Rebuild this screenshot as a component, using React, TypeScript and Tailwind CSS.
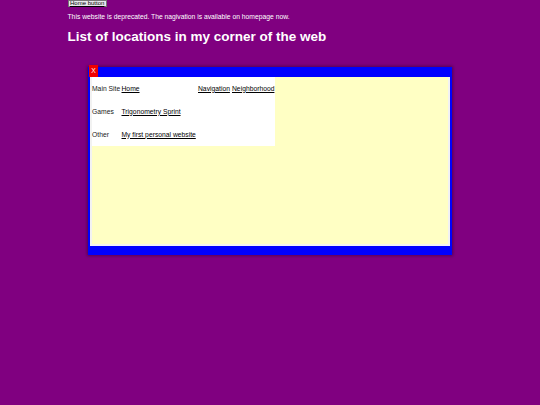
export default function App() {
  return (
    <div
      className="min-h-[405px] w-full bg-[#800080] pl-[67.5px]"
      style={{ fontFamily: '"Liberation Sans", Arial, sans-serif' }}
    >
      <button className="block h-[7px] border border-[#767676] bg-[#e9e9ed] px-[1.5px] text-[6px] leading-[5px] text-black underline">
        Home button
      </button>
      <p className="mt-[5.5px] text-[6.75px] leading-[8px] text-white">
        This website is deprecated. The nagivation is available on homepage now.
      </p>
      <h2 className="mt-[8.5px] text-[13.5px] font-bold leading-[16px] text-white">
        List of locations in my corner of the web
      </h2>
      <div className="relative ml-[20.5px] mt-[22px] flex h-[188px] w-[364px] flex-col bg-[#0000ff] px-[2px] pb-[9px] pt-[10px] shadow-[0_0_3px_1px_rgba(0,0,0,0.35)]">
        <div className="absolute left-[1px] top-[-2px] flex h-[12px] w-[9px] items-center justify-center bg-[#f00000] text-[6.75px] leading-none text-white">
          X
        </div>
        <div className="flex-1 border-x-2 border-b-2 border-[#f2f2f2] bg-[#ffffc4]">
          <div className="grid w-[183px] grid-cols-[29.5px_76.5px_34px_1fr] grid-rows-[23px_23px_23px] items-center bg-white text-[6.75px] leading-[8px] text-[#222222]">
            <span>Main Site</span>
            <a className="text-black underline">Home</a>
            <a className="text-black underline">Navigation</a>
            <a className="text-black underline">Neighborhood</a>
            <span>Games</span>
            <a className="col-span-3 text-black underline">Trigonometry Sprint</a>
            <span>Other</span>
            <a className="col-span-3 text-black underline">My first personal website</a>
          </div>
        </div>
      </div>
    </div>
  );
}
